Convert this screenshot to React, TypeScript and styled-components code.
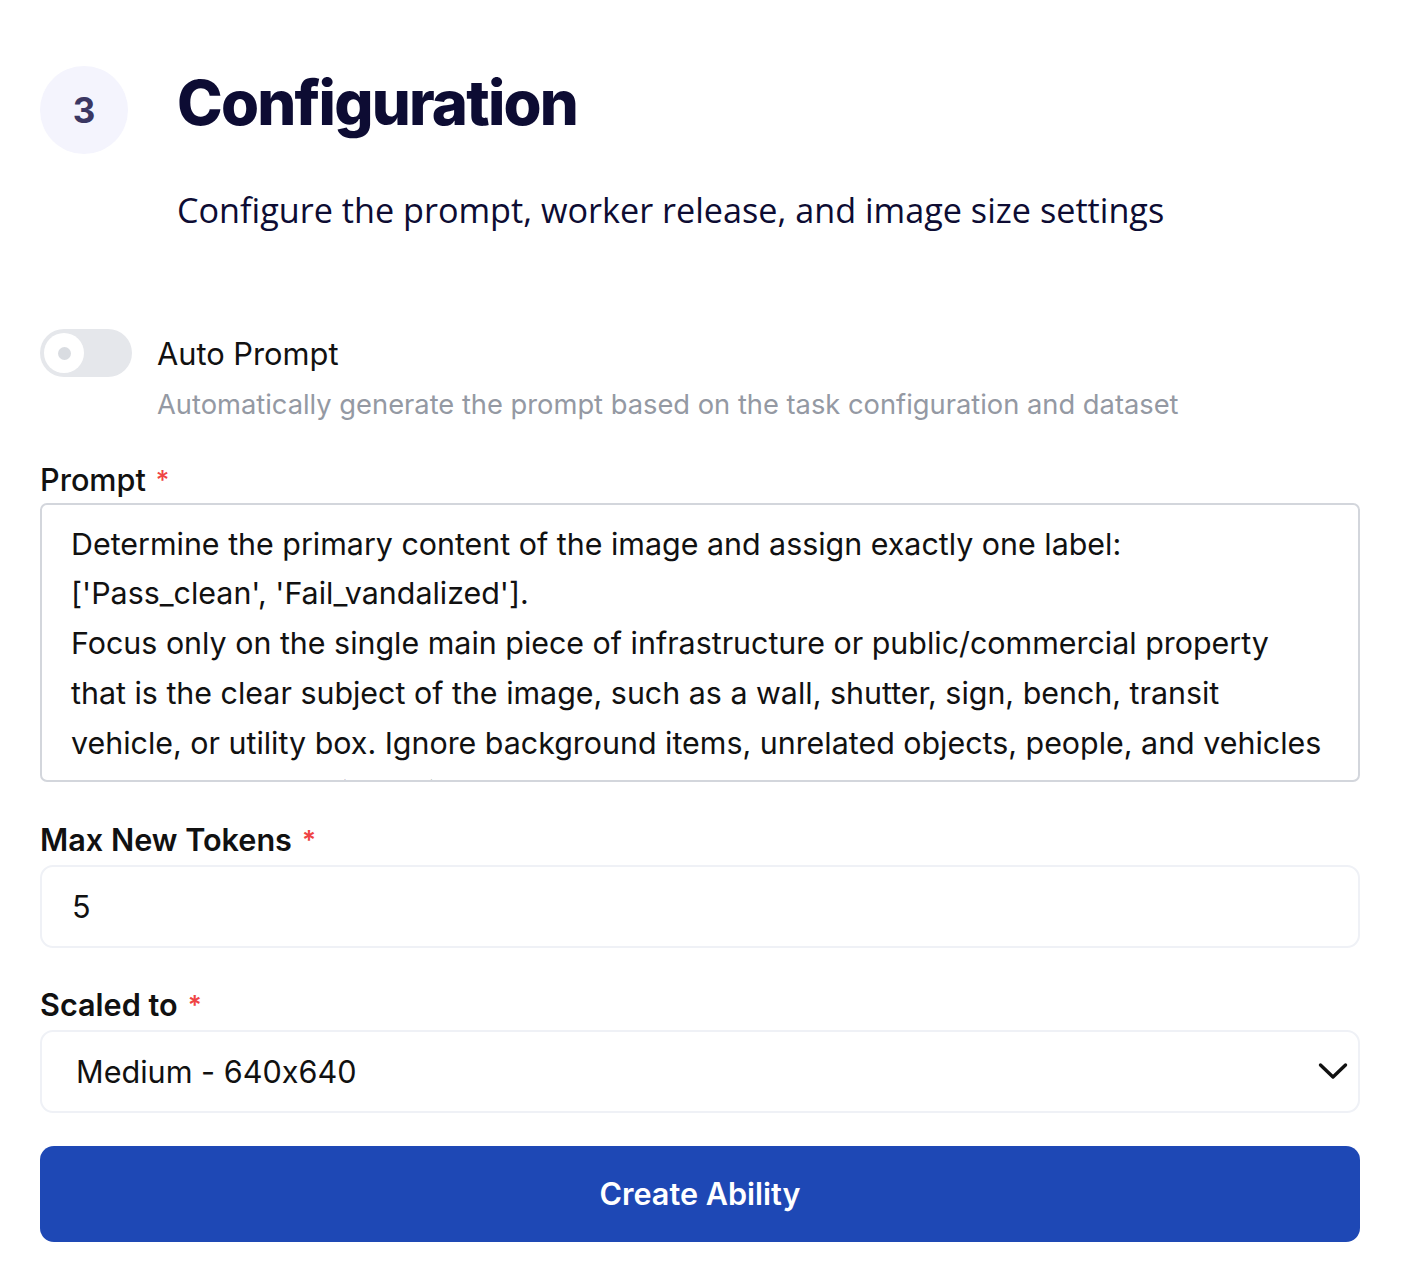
import React from "react";
import styled, { createGlobalStyle } from "styled-components";

const Global = createGlobalStyle`
  html, body { margin: 0; padding: 0; background: #ffffff; }
  body {
    font-family: Inter, "Noto Sans", sans-serif;
    color: #111827;
    font-feature-settings: "calt" 0;
  }
  * { box-sizing: border-box; }
`;

const Page = styled.div`
  padding: 66px 44px 40px 40px;
  display: flex;
  flex-direction: column;
`;

const Header = styled.div`
  display: grid;
  grid-template-columns: 88px 1fr;
  column-gap: 49px;
  align-items: center;
`;

const StepCircle = styled.div`
  width: 88px;
  height: 88px;
  border-radius: 50%;
  background: #f4f4fd;
  display: flex;
  align-items: center;
  justify-content: center;
  font-family: Inter, sans-serif;
  font-weight: 700;
  font-size: 35px;
  color: #3b3762;
`;

const Title = styled.h1`
  margin: 0 0 14px 0;
  font-family: Inter, sans-serif;
  font-weight: 800;
  font-size: 61.5px;
  letter-spacing: -1.8px;
  color: #0d0c33;
  line-height: 1;
`;

const Subtitle = styled.p`
  grid-column: 2;
  margin: 35px 0 0 0;
  font-family: "Open Sans", sans-serif;
  font-size: 34.2px;
  font-weight: 400;
  color: #0d0c33;
  line-height: 1.2;
`;

const ToggleRow = styled.div`
  display: grid;
  grid-template-columns: 92px 1fr;
  column-gap: 25px;
  margin-top: 97px;
`;

const Switch = styled.div`
  width: 92px;
  height: 48px;
  border-radius: 24px;
  background: #e5e7eb;
  padding: 4px;
  display: flex;
  align-items: center;
  margin-top: 2px;
`;

const Knob = styled.div`
  width: 40px;
  height: 40px;
  border-radius: 50%;
  background: #ffffff;
  display: flex;
  align-items: center;
  justify-content: center;
  &::after {
    content: "";
    width: 13px;
    height: 13px;
    border-radius: 50%;
    background: #d9dce1;
  }
`;

const ToggleText = styled.div`
  display: flex;
  flex-direction: column;
`;

const ToggleTitle = styled.div`
  font-size: 30.8px;
  line-height: 54px;
  color: #111111;
`;

const ToggleDesc = styled.div`
  font-size: 27.3px;
  line-height: 1.2;
  color: #9499a3;
  margin-top: 8px;
`;

const Field = styled.div<{ $top: number }>`
  display: flex;
  flex-direction: column;
  margin-top: ${(p) => p.$top}px;
`;

const Label = styled.label<{ $weight?: number; $gap?: number }>`
  font-size: 30.6px;
  font-weight: ${(p) => p.$weight ?? 500};
  color: #111111;
  line-height: 36px;
  margin-bottom: ${(p) => p.$gap ?? 5}px;
`;

const Star = styled.span`
  color: #ef4444;
  margin-left: 10px;
  font-size: 26px;
  vertical-align: top;
`;

const TextArea = styled.div`
  height: 279px;
  border: 2px solid #d3d6dc;
  border-radius: 7px;
  padding: 15px 26px 0 29px;
  font-size: 30.4px;
  line-height: 49.7px;
  color: #111111;
  overflow: hidden;
  white-space: pre-wrap;
`;

const Input = styled.div<{ $pad: number }>`
  height: 83px;
  border: 2px solid #eff1f6;
  border-radius: 13px;
  padding: 0 10px 0 ${(p) => p.$pad}px;
  display: flex;
  align-items: center;
  justify-content: space-between;
  font-size: 30.6px;
  color: #111111;
`;

const Button = styled.button`
  margin-top: 33px;
  height: 96px;
  border: none;
  border-radius: 14px;
  background: #1e48b5;
  color: #ffffff;
  font-family: Inter, sans-serif;
  font-size: 30.6px;
  font-weight: 600;
  cursor: pointer;
`;

const promptText = `Determine the primary content of the image and assign exactly one label:
['Pass_clean', 'Fail_vandalized'].
Focus only on the single main piece of infrastructure or public/commercial property that is the clear subject of the image, such as a wall, shutter, sign, bench, transit vehicle, or utility box. Ignore background items, unrelated objects, people, and vehicles that are not the main subject.`;

export default function App() {
  return (
    <>
      <Global />
      <Page>
        <Header>
          <StepCircle>3</StepCircle>
          <Title>Configuration</Title>
          <Subtitle>Configure the prompt, worker release, and image size settings</Subtitle>
        </Header>

        <ToggleRow>
          <Switch>
            <Knob />
          </Switch>
          <ToggleText>
            <ToggleTitle>Auto Prompt</ToggleTitle>
            <ToggleDesc>Automatically generate the prompt based on the task configuration and dataset</ToggleDesc>
          </ToggleText>
        </ToggleRow>

        <Field $top={40}>
          <Label>
            Prompt<Star>*</Star>
          </Label>
          <TextArea>{promptText}</TextArea>
        </Field>

        <Field $top={40}>
          <Label $weight={600} $gap={7}>
            Max New Tokens<Star>*</Star>
          </Label>
          <Input $pad={30}>5</Input>
        </Field>

        <Field $top={39}>
          <Label $weight={600} $gap={7}>
            Scaled to<Star>*</Star>
          </Label>
          <Input $pad={34}>
            <span>Medium - 640x640</span>
            <svg width="30" height="18" viewBox="0 0 30 18" fill="none">
              <path d="M2.5 3 L15 15 L27.5 3" stroke="#111" strokeWidth="3.4" strokeLinecap="round" strokeLinejoin="round" />
            </svg>
          </Input>
        </Field>

        <Button>Create Ability</Button>
      </Page>
    </>
  );
}
